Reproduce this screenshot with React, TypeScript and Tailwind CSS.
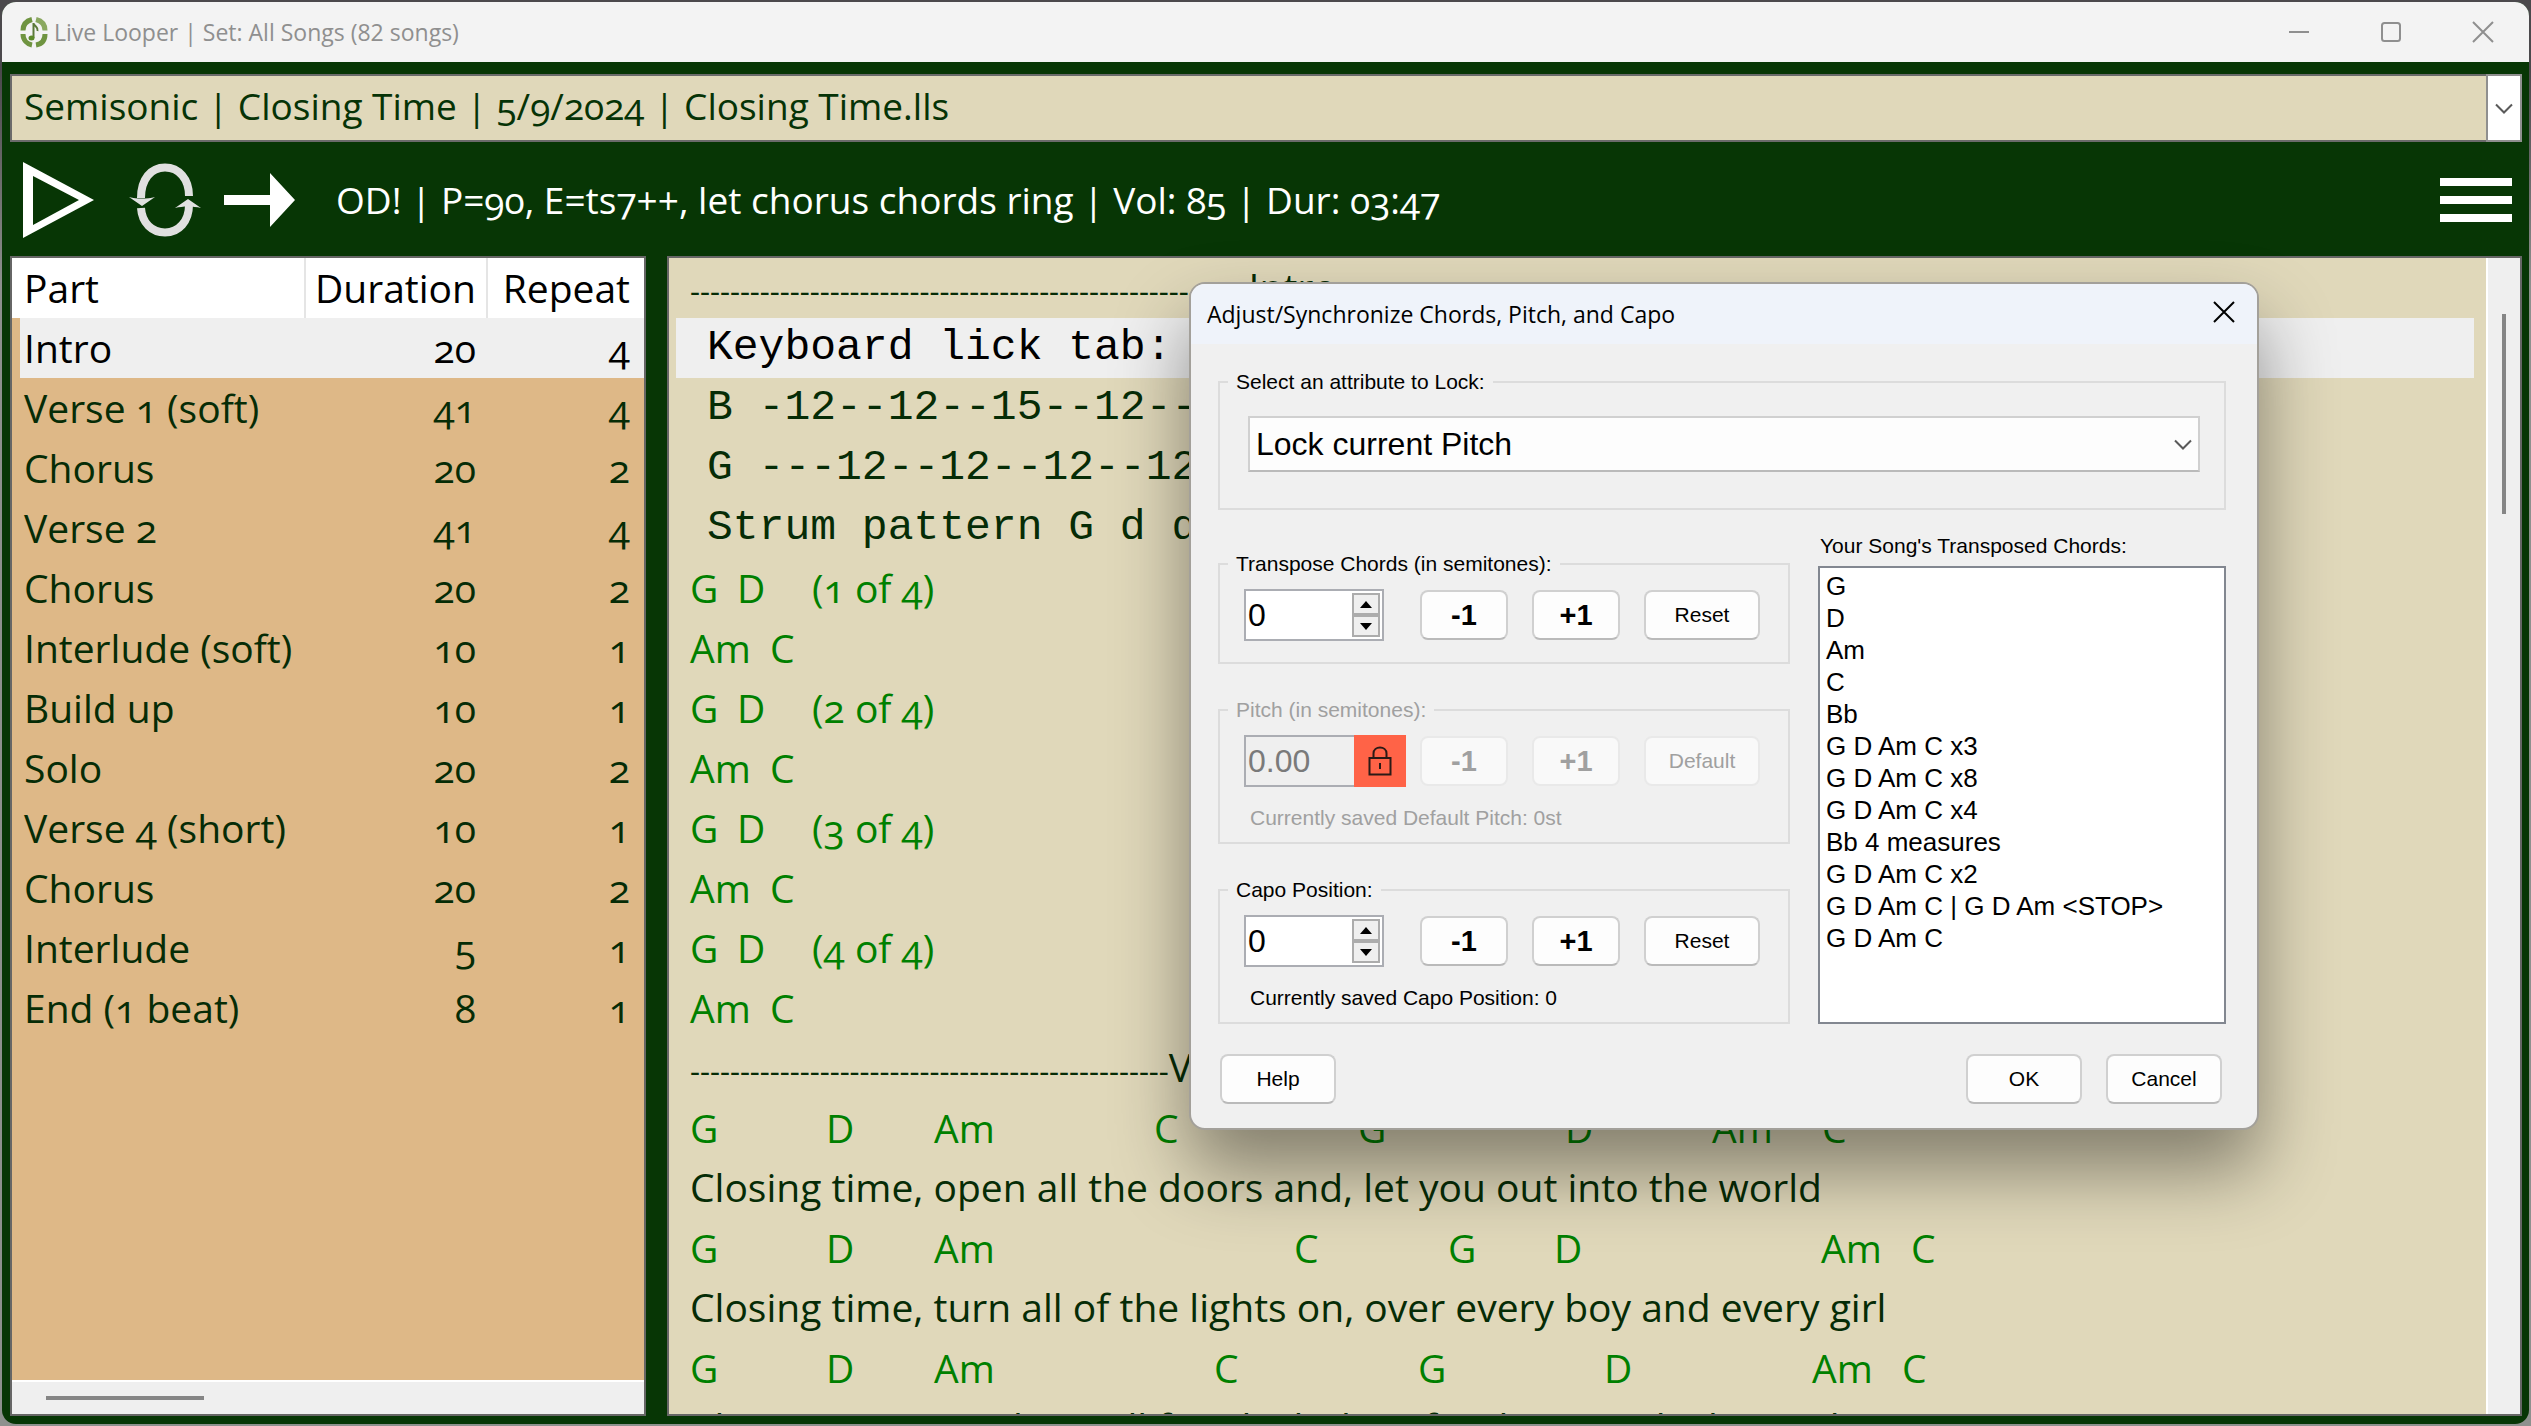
import type { ReactNode } from "react";

type Part = { name: string; duration: number; repeat: number };

const parts: Part[] = [
  { name: "Intro", duration: 20, repeat: 4 },
  { name: "Verse 1 (soft)", duration: 41, repeat: 4 },
  { name: "Chorus", duration: 20, repeat: 2 },
  { name: "Verse 2", duration: 41, repeat: 4 },
  { name: "Chorus", duration: 20, repeat: 2 },
  { name: "Interlude (soft)", duration: 10, repeat: 1 },
  { name: "Build up", duration: 10, repeat: 1 },
  { name: "Solo", duration: 20, repeat: 2 },
  { name: "Verse 4 (short)", duration: 10, repeat: 1 },
  { name: "Chorus", duration: 20, repeat: 2 },
  { name: "Interlude", duration: 5, repeat: 1 },
  { name: "End (1 beat)", duration: 8, repeat: 1 },
];

/* A chord and the width it takes up before the next one starts. */
type Chord = [label: string, width: number];

type Line =
  | { kind: "rule"; dashes: number; label: string }
  | { kind: "tab"; text: string; current?: boolean }
  | { kind: "chords"; chords: Chord[] }
  | { kind: "lyric"; text: string };

const lines: Line[] = [
  { kind: "rule", dashes: 56, label: "Intro" },
  { kind: "tab", text: "Keyboard lick tab:", current: true },
  { kind: "tab", text: "B -12--12--15--12--" },
  { kind: "tab", text: "G ---12--12--12--12" },
  { kind: "tab", text: "Strum pattern G d d" },
  { kind: "chords", chords: [["G", 47], ["D", 75], ["(1 of 4)", 0]] },
  { kind: "chords", chords: [["Am", 80], ["C", 0]] },
  { kind: "chords", chords: [["G", 47], ["D", 75], ["(2 of 4)", 0]] },
  { kind: "chords", chords: [["Am", 80], ["C", 0]] },
  { kind: "chords", chords: [["G", 47], ["D", 75], ["(3 of 4)", 0]] },
  { kind: "chords", chords: [["Am", 80], ["C", 0]] },
  { kind: "chords", chords: [["G", 47], ["D", 75], ["(4 of 4)", 0]] },
  { kind: "chords", chords: [["Am", 80], ["C", 0]] },
  { kind: "rule", dashes: 48, label: "Verse 1 (soft)" },
  { kind: "chords", chords: [["G", 136], ["D", 108], ["Am", 220], ["C", 204], ["G", 207], ["D", 147], ["Am", 110], ["C", 0]] },
  { kind: "lyric", text: "Closing time, open all the doors and, let you out into the world" },
  { kind: "chords", chords: [["G", 136], ["D", 108], ["Am", 360], ["C", 154], ["G", 106], ["D", 267], ["Am", 90], ["C", 0]] },
  { kind: "lyric", text: "Closing time, turn all of the lights on, over every boy and every girl" },
  { kind: "chords", chords: [["G", 136], ["D", 108], ["Am", 280], ["C", 204], ["G", 186], ["D", 208], ["Am", 90], ["C", 0]] },
  { kind: "lyric", text: "Closing time, one last call for alcohol, so finish your whiskey or beer" },
];

const transposed = [
  "G",
  "D",
  "Am",
  "C",
  "Bb",
  "G D Am C x3",
  "G D Am C x8",
  "G D Am C x4",
  "Bb 4 measures",
  "G D Am C x2",
  "G D Am C | G D Am <STOP>",
  "G D Am C",
];

function Cross() {
  return (
    <svg width="22" height="22" viewBox="0 0 22 22" fill="none" stroke="currentColor" strokeWidth="2" aria-hidden="true">
      <path d="M1 1 L21 21 M21 1 L1 21" />
    </svg>
  );
}

function Chevron() {
  return (
    <svg width="18" height="11" viewBox="0 0 18 11" fill="none" stroke="#5a5a5a" strokeWidth="2" aria-hidden="true">
      <path d="M1 1.5 L9 9.5 L17 1.5" />
    </svg>
  );
}

function TitleBar() {
  return (
    <header className="flex h-[60px] shrink-0 items-center bg-[#f3f3f3] pl-[18px] text-[#8f8f8f]">
      <svg width="28" height="32" viewBox="0 0 28 32" fill="none" aria-hidden="true">
        <g stroke="#6f9440" strokeWidth="5">
          <path d="M12 3.5 C6 5 3 9 3 14.5" />
          <path d="M16 3.5 C22 5 25 9 25 14.5" stroke="#8aa860" />
          <path d="M3 18 C3 24 7 28 12 29" />
          <path d="M16 29 C22 28 25 24 25 18" />
        </g>
        <path d="M13.500 7 V22 M14 8 C15 11 18.500 11 17.500 15" stroke="#5c7a3a" strokeWidth="2" />
        <ellipse cx="11.500" cy="22" rx="3" ry="2.500" fill="#5c8a2a" />
      </svg>
      <h1 className="ml-1.5 font-['Open_Sans',sans-serif] text-[23px] leading-8">Live Looper | Set: All Songs (82 songs)</h1>
      <div className="ml-auto flex h-full">
        <button type="button" aria-label="Minimize" className="flex w-[92px] items-center justify-center">
          <svg width="20" height="2" viewBox="0 0 20 2" aria-hidden="true"><path d="M0 0H20V2H0Z" fill="currentColor" /></svg>
        </button>
        <button type="button" aria-label="Maximize" className="flex w-[92px] items-center justify-center">
          <svg width="20" height="20" viewBox="0 0 20 20" fill="none" aria-hidden="true"><rect x="1" y="1" width="18" height="18" rx="2.500" stroke="currentColor" strokeWidth="2" /></svg>
        </button>
        <button type="button" aria-label="Close" className="flex w-[92px] items-center justify-center"><Cross /></button>
      </div>
    </header>
  );
}

function SongPicker() {
  return (
    <div className="relative mt-3 h-[68px] shrink-0">
      <select
        aria-label="Song"
        className="h-full w-full appearance-none rounded-none border-2 border-[#6b6b6b] bg-[#e0d8ba] pr-10 pb-1 pl-3 text-[37px] text-[#063306]"
      >
        <option>Semisonic | Closing Time | 5/9/2024 | Closing Time.lls</option>
      </select>
      <span className="pointer-events-none absolute inset-y-0 right-0 flex w-9 items-center justify-center border-2 border-[#8f8f8f] bg-white">
        <Chevron />
      </span>
    </div>
  );
}

function Toolbar() {
  return (
    <div className="flex h-[114px] shrink-0 items-center pt-0.5 pr-2.5 pl-[13px]">
      <button type="button" aria-label="Play">
        <svg width="72" height="76" viewBox="0 0 72 76" aria-hidden="true">
          <path fillRule="evenodd" fill="#fff" d="M0 0 L71 38 L0 76 Z M10 14 V63 L56 38 Z" />
        </svg>
      </button>
      <button type="button" aria-label="Loop" className="ml-[34px]">
        <svg width="73" height="74" viewBox="0 0 73 74" fill="none" aria-hidden="true">
          <g stroke="#e0e0e0" strokeWidth="8">
            <path d="M12 35 C12 16 22 4.500 36 4.500 C50 4.500 60 16 60 33" />
            <path d="M12 45 C13 60 23 69.500 36 69.500 C50 69.500 60 58 60 42" />
          </g>
          <path d="M0 34 C8 36 18 36 26 34 L13 43 Z M46 45 C54 43 64 43 72 45 L59 36 Z" fill="#e0e0e0" />
        </svg>
      </button>
      <button type="button" aria-label="Next part" className="ml-[22px]">
        <svg width="72" height="54" viewBox="0 0 72 54" aria-hidden="true">
          <path fill="#fff" d="M0 22 H46 V0 L71 27 L46 54 V32 H0 Z" />
        </svg>
      </button>
      <p className="ml-10 text-[37px] leading-[60px] whitespace-nowrap text-white">
        OD! | P=90, E=ts7++, let chorus chords ring | Vol: 85 | Dur: 03:47
      </p>
      <button type="button" aria-label="Menu" className="ml-auto flex w-[72px] flex-col gap-2.5">
        <span className="block h-2 w-full bg-white" />
        <span className="block h-2 w-full bg-white" />
        <span className="block h-2 w-full bg-white" />
      </button>
    </div>
  );
}

function PartsPanel() {
  return (
    <section aria-label="Parts" className="flex w-[636px] shrink-0 flex-col border-2 border-[#666] bg-[#deb887]">
      <div className="min-h-0 flex-1 overflow-hidden">
        <table className="w-full table-fixed border-separate border-spacing-0 text-[39px] leading-[60px] text-[#062c06]">
          <colgroup>
            <col />
            <col className="w-[182px]" />
            <col className="w-[156px]" />
          </colgroup>
          <thead>
            <tr className="bg-white text-black">
              <th scope="col" className="h-[60px] border-r-2 border-[#e5e5e5] py-0 pr-2 pl-3 text-left font-normal">Part</th>
              <th scope="col" className="h-[60px] border-r-2 border-[#e5e5e5] py-0 pr-2.5 text-right font-normal">Duration</th>
              <th scope="col" className="h-[60px] py-0 pr-3.5 text-right font-normal">Repeat</th>
            </tr>
          </thead>
          <tbody>
            {parts.map((part, i) => (
              <tr key={i} className={i === 0 ? "bg-[#efefef] text-black" : ""}>
                <td className="h-[60px] border-l-8 border-[#deb887] py-0 pl-1 whitespace-nowrap">{part.name}</td>
                <td className="h-[60px] py-0 pr-3 text-right">{part.duration}</td>
                <td className="h-[60px] py-0 pr-3.5 text-right">{part.repeat}</td>
              </tr>
            ))}
          </tbody>
        </table>
      </div>
      <div className="flex h-[34px] shrink-0 items-center border-t-2 border-white bg-[#efefef] pl-[34px]">
        <div className="h-1 w-[158px] bg-[#858585]" />
      </div>
    </section>
  );
}

function ChartLine({ line }: { line: Line }) {
  switch (line.kind) {
    case "rule":
      return (
        <p className="h-[60px] pl-[21px] leading-[58px]">
          <span className="text-[31px]">{"-".repeat(line.dashes)}</span>
          {line.label}
        </p>
      );
    case "tab":
      return (
        <p
          className={
            line.current
              ? "mr-3 ml-[7px] h-[60px] bg-[#efefef] pl-[31px] font-['Liberation_Mono',monospace] text-[43px] leading-[60px] text-black"
              : "h-[60px] pl-[38px] font-['Liberation_Mono',monospace] text-[43px] leading-[60px]"
          }
        >
          {line.text}
        </p>
      );
    case "chords":
      return (
        <p className="flex h-[60px] pl-[21px] leading-[60px] text-[#008000]">
          {line.chords.map(([label, width], i) => (
            <span key={i} className="shrink-0" style={width ? { width } : undefined}>
              {label}
            </span>
          ))}
        </p>
      );
    case "lyric":
      return <p className="h-[60px] pl-[21px] leading-[58px]">{line.text}</p>;
  }
}

function ChartPanel() {
  return (
    <section aria-label="Song chart" className="flex min-w-0 flex-1 border-2 border-[#666] bg-[#e0d8ba]">
      <div className="min-w-0 flex-1 overflow-hidden text-[39px] whitespace-pre text-[#062c06]">
        {lines.map((line, i) => (
          <ChartLine key={i} line={line} />
        ))}
      </div>
      <div className="flex w-[34px] shrink-0 justify-center border-l-2 border-white bg-[#efefef] pt-14">
        <div className="h-[200px] w-1 bg-[#858585]" />
      </div>
    </section>
  );
}

function Group({ title, className, disabled, children }: { title: string; className: string; disabled?: boolean; children: ReactNode }) {
  return (
    <fieldset disabled={disabled} className={`min-w-0 border-2 border-[#dcdcdc] px-2 disabled:text-[#a0a0a0] ${className}`}>
      <legend className="px-2 leading-6">{title}</legend>
      {children}
    </fieldset>
  );
}

function PushButton({ children, step }: { children: ReactNode; step?: boolean }) {
  return (
    <button
      type="button"
      className={
        "h-[50px] rounded-lg border-2 border-[#d0d0d0] border-b-[#bababa] bg-[#fdfdfd] disabled:border-[#e9e9e9] disabled:bg-[#f9f9f9] " +
        (step ? "w-[88px] text-[29px] font-bold" : "w-[116px]")
      }
    >
      {children}
    </button>
  );
}

function Spinner({ label, value }: { label: string; value: string }) {
  return (
    <div className="flex h-[52px] w-[140px] border-2 border-[#abadb3] bg-white">
      <input aria-label={label} defaultValue={value} className="min-w-0 flex-1 pl-0.5 text-[32px] outline-none" />
      <div className="flex w-8 flex-col p-0.5">
        <button type="button" aria-label={`${label} up`} className="flex flex-1 items-center justify-center border-2 border-[#acacac] bg-[#efefef]">
          <svg width="12" height="7" viewBox="0 0 12 7" aria-hidden="true"><path d="M6 0 L12 7 H0 Z" /></svg>
        </button>
        <button type="button" aria-label={`${label} down`} className="flex flex-1 items-center justify-center border-2 border-[#acacac] bg-[#efefef]">
          <svg width="12" height="7" viewBox="0 0 12 7" aria-hidden="true"><path d="M0 0 H12 L6 7 Z" /></svg>
        </button>
      </div>
    </div>
  );
}

function ControlRow({ field, reset }: { field: ReactNode; reset: string }) {
  return (
    <div className="mt-[13px] flex items-center gap-6 pl-4">
      <div className="w-[152px]">{field}</div>
      <PushButton step>-1</PushButton>
      <PushButton step>+1</PushButton>
      <PushButton>{reset}</PushButton>
    </div>
  );
}

function LockedPitch() {
  return (
    <div className="flex h-[52px] w-[162px]">
      <input
        aria-label="Pitch in semitones"
        defaultValue="0.00"
        className="w-[110px] border-2 border-r-0 border-[#abadb3] bg-[#efefef] pl-0.5 text-[32px] text-[#7a7a7a]"
      />
      <span role="img" aria-label="Locked" className="flex w-[52px] items-center justify-center bg-[#ff6347]">
        <svg width="24" height="30" viewBox="0 0 24 30" fill="none" stroke="#2b1a16" strokeWidth="2" aria-hidden="true">
          <path d="M1.500 12 H22.500 V28.500 H1.500 Z M5.500 12 V7.500 C5.500 -0.500 18.500 -0.500 18.500 7.500 V12 M12 17 V23" />
        </svg>
      </span>
    </div>
  );
}

function AdjustDialog() {
  return (
    <div
      role="dialog"
      aria-labelledby="adjust-title"
      className="absolute top-[282px] left-[1189px] w-[1070px] overflow-hidden rounded-2xl border-2 border-[#a3a09a] bg-[#f0f0f0] font-['Liberation_Sans',sans-serif] text-[21px] leading-6 text-black shadow-[0_40px_75px_rgba(0,0,0,0.42)]"
    >
      <div className="flex h-[60px] items-center bg-[#eff3fa] pr-[22px] pl-4">
        <h2 id="adjust-title" className="font-['Open_Sans',sans-serif] text-[23px] leading-8">
          Adjust/Synchronize Chords, Pitch, and Capo
        </h2>
        <button type="button" aria-label="Close dialog" className="ml-auto pb-1"><Cross /></button>
      </div>
      <div className="px-[27px] pt-[26px] pb-6">
        <Group title="Select an attribute to Lock:" className="mr-1 pb-9">
          <div className="relative mt-[22px] mr-4 ml-5">
            <select
              aria-label="Select an attribute to Lock"
              className="h-14 w-full appearance-none border-2 border-[#d0d0d0] border-b-[#bababa] bg-[#fdfdfd] pr-10 pl-1.5 text-[32px]"
            >
              <option>Lock current Pitch</option>
            </select>
            <span className="pointer-events-none absolute inset-y-0 right-2 flex items-center"><Chevron /></span>
          </div>
        </Group>
        <div className="mr-1 grid grid-cols-[572px_1fr] gap-x-7">
          <div className="pt-[42px]">
            <Group title="Transpose Chords (in semitones):" className="pb-[21px]">
              <ControlRow field={<Spinner label="Transpose" value="0" />} reset="Reset" />
            </Group>
            <Group title="Pitch (in semitones):" className="mt-[34px] pb-3" disabled>
              <ControlRow field={<LockedPitch />} reset="Default" />
              <p className="mt-[19px] pl-[22px]">Currently saved Default Pitch: 0st</p>
            </Group>
            <Group title="Capo Position:" className="mt-[34px] pb-3">
              <ControlRow field={<Spinner label="Capo" value="0" />} reset="Reset" />
              <p className="mt-[19px] pl-[22px]">Currently saved Capo Position: 0</p>
            </Group>
          </div>
          <div className="flex flex-col pt-6">
            <p id="chords-label" className="pl-0.5">Your Song's Transposed Chords:</p>
            <ul aria-labelledby="chords-label" className="mt-2 flex-1 border-2 border-[#828790] bg-white pt-0.5 pl-1.5 text-[26px] leading-8">
              {transposed.map((chord) => (
                <li key={chord}>{chord}</li>
              ))}
            </ul>
          </div>
        </div>
        <div className="mt-[30px] mr-2 ml-0.5 flex gap-6">
          <PushButton>Help</PushButton>
          <span className="flex-1" />
          <PushButton>OK</PushButton>
          <PushButton>Cancel</PushButton>
        </div>
      </div>
    </div>
  );
}

export default function App() {
  return (
    <div className="relative h-screen overflow-hidden bg-linear-to-b from-[#4b494c] from-5% to-[#8e918e] to-20% p-0.5 font-['Open_Sans',sans-serif]">
      <div className="flex h-full flex-col overflow-hidden rounded-[14px] bg-[#073605]">
        <TitleBar />
        <main className="flex min-h-0 flex-1 flex-col pr-[7px] pb-2 pl-2 oldstyle-nums">
          <SongPicker />
          <Toolbar />
          <div className="flex min-h-0 flex-1 gap-[21px]">
            <PartsPanel />
            <ChartPanel />
          </div>
        </main>
      </div>
      <AdjustDialog />
    </div>
  );
}
